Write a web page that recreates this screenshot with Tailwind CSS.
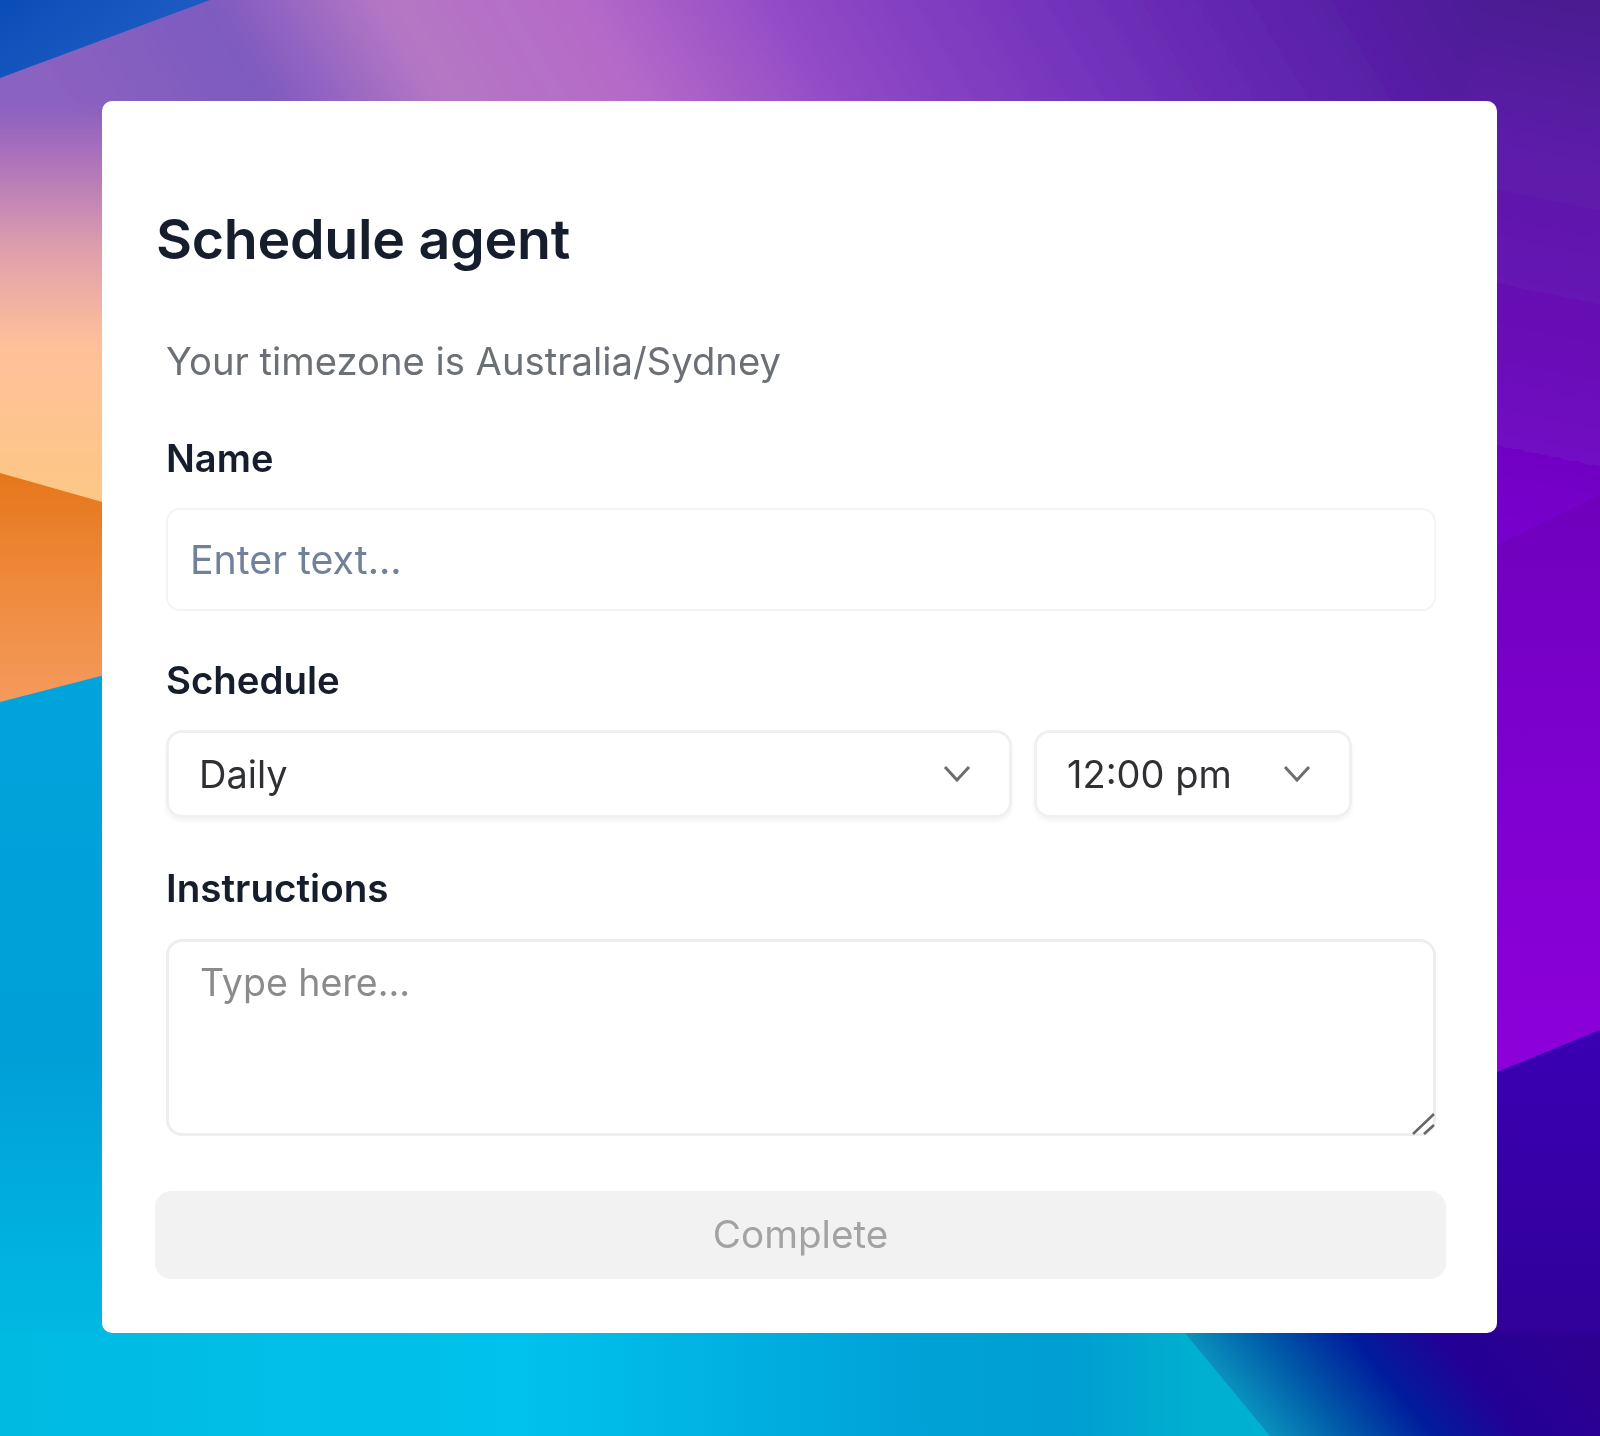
<!DOCTYPE html>
<html lang="en">
<head>
    <meta charset="UTF-8">
    <meta name="viewport" content="width=device-width, initial-scale=1.0">
    <title>Schedule agent</title>
    <script src="https://cdn.jsdelivr.net/npm/@tailwindcss/browser@4"></script>
</head>
<body class="relative w-[1600px] h-[1436px] overflow-hidden pt-[101px] pl-[102px] font-['Inter',sans-serif]">
    <!-- wallpaper -->
    <svg class="absolute inset-0" width="1600" height="1436" viewBox="0 0 1600 1436" xmlns="http://www.w3.org/2000/svg">
        <defs>
            <linearGradient id="top" gradientUnits="userSpaceOnUse" x1="0" y1="0" x2="1175" y2="-705">
                <stop offset="0" stop-color="#8a62c0"/>
                <stop offset="0.13" stop-color="#7e5ac0"/>
                <stop offset="0.24" stop-color="#b577c4"/>
                <stop offset="0.36" stop-color="#b56ac8"/>
                <stop offset="0.5" stop-color="#8f48c6"/>
                <stop offset="0.65" stop-color="#7434bc"/>
                <stop offset="0.82" stop-color="#5a20a8"/>
                <stop offset="1" stop-color="#43198a"/>
            </linearGradient>
            <linearGradient id="left" x1="0" y1="0" x2="0" y2="1">
                <stop offset="0" stop-color="#9064be"/>
                <stop offset="0.09" stop-color="#a86ebc"/>
                <stop offset="0.34" stop-color="#e0a0ac"/>
                <stop offset="0.568" stop-color="#ffc09a"/>
                <stop offset="1" stop-color="#fdc882"/>
            </linearGradient>
            <linearGradient id="orange" x1="0" y1="0" x2="0" y2="1">
                <stop offset="0" stop-color="#e6761a"/>
                <stop offset="0.45" stop-color="#ee8a3c"/>
                <stop offset="1" stop-color="#f69c62"/>
            </linearGradient>
            <linearGradient id="blue" x1="0" y1="0" x2="0" y2="1">
                <stop offset="0" stop-color="#00a4dc"/>
                <stop offset="0.5" stop-color="#009fd8"/>
                <stop offset="0.85" stop-color="#00b8e2"/>
                <stop offset="1" stop-color="#00c0e6"/>
            </linearGradient>
            <linearGradient id="right" gradientUnits="userSpaceOnUse" x1="1620" y1="-20" x2="1500" y2="560">
                <stop offset="0" stop-color="#451a8c"/>
                <stop offset="0.3" stop-color="#5c1ea8"/>
                <stop offset="0.65" stop-color="#6a0cb8"/>
                <stop offset="1" stop-color="#7a00d0"/>
            </linearGradient>
            <linearGradient id="violet" x1="0" y1="0" x2="0" y2="1">
                <stop offset="0" stop-color="#7000bc"/>
                <stop offset="0.5" stop-color="#7f00d0"/>
                <stop offset="1" stop-color="#8d00da"/>
            </linearGradient>
            <linearGradient id="indigo" x1="0" y1="0" x2="0" y2="1">
                <stop offset="0" stop-color="#3a00b4"/>
                <stop offset="1" stop-color="#2e0090"/>
            </linearGradient>
            <linearGradient id="bottom" gradientUnits="userSpaceOnUse" x1="0" y1="1333" x2="1300" y2="1333">
                <stop offset="0" stop-color="#00bae2"/>
                <stop offset="0.4" stop-color="#00c2ec"/>
                <stop offset="0.68" stop-color="#00a4d8"/>
                <stop offset="0.82" stop-color="#009ed2"/>
                <stop offset="0.92" stop-color="#00b0d0"/>
            </linearGradient>
            <linearGradient id="deep" gradientUnits="userSpaceOnUse" x1="1230" y1="1385" x2="1461" y2="1194">
                <stop offset="0" stop-color="#0a8fbc"/>
                <stop offset="0.2" stop-color="#0058a8"/>
                <stop offset="0.42" stop-color="#001c9c"/>
                <stop offset="0.65" stop-color="#240096"/>
                <stop offset="1" stop-color="#2e0090"/>
            </linearGradient>
            <linearGradient id="corner" gradientUnits="userSpaceOnUse" x1="0" y1="0" x2="120" y2="170">
                <stop offset="0" stop-color="#0a4cb8"/>
                <stop offset="1" stop-color="#2a66c8"/>
            </linearGradient>
            <filter id="soft" filterUnits="userSpaceOnUse" x="-100" y="-100" width="1800" height="1636">
                <feGaussianBlur stdDeviation="9"/>
            </filter>
        </defs>
        <g filter="url(#soft)">
            <rect x="-60" y="-60" width="1720" height="190" fill="url(#top)"/>
            <rect x="-60" y="115" width="200" height="405" fill="url(#left)"/>
            <rect x="1470" y="-60" width="190" height="640" fill="url(#right)"/>
        </g>
        <polygon points="0,0 210,0 0,78" fill="url(#corner)"/>
        <polygon points="1470,558 1600,495 1600,1052 1470,1078" fill="url(#violet)"/>
        <polygon points="1470,1083 1600,1030 1600,1436 1470,1436" fill="url(#indigo)"/>
        <polygon points="0,473 120,507 120,690 0,720" fill="url(#orange)"/>
        <polygon points="0,702 120,671 120,1436 0,1436" fill="url(#blue)"/>
        <rect x="0" y="1333" width="1300" height="103" fill="url(#bottom)"/>
        <polygon points="1185,1333 1600,1333 1600,1436 1270,1436" fill="url(#deep)"/>
    </svg>

    <main class="relative w-[1395px] h-[1232px] rounded-[10px] bg-white text-[#161e2e]">
        <div class="blur-[0.6px]">
            <h1 class="pl-[54px] pt-[108px] text-[55.5px] leading-[60px] font-semibold tracking-[-0.3px]">Schedule agent</h1>
            <form class="pl-[64px] pt-[68px]">
                <p class="text-[38.2px] leading-[48px] text-[#6b6f76]">Your timezone is Australia/Sydney</p>

                <label class="block mt-[50px] text-[38px] leading-[46px] font-semibold">Name</label>
                <input class="block mt-[27px] w-[1270px] h-[103px] rounded-[14px] border-2 border-[#f3f4f5] pl-[22px] text-[39.3px] placeholder:text-[#70819a]" placeholder="Enter text...">

                <label class="block mt-[46px] text-[38.4px] leading-[46px] font-semibold">Schedule</label>
                <div class="mt-[27px] flex gap-[22px]">
                    <div class="flex items-center justify-between w-[846px] h-[88px] rounded-[16px] border-[3px] border-[#f0f0f0] shadow-[0_3px_4px_rgba(0,0,0,0.05)] pl-[30px] pr-[37px] text-[38px] text-[#2f3033]">
                        <span>Daily</span>
                        <svg width="30" height="22" viewBox="0 0 30 22" fill="none" stroke="#6e6e6e" stroke-width="3"><path d="M3 4 L15 17 L27 4"/></svg>
                    </div>
                    <div class="flex items-center justify-between w-[318px] h-[88px] rounded-[16px] border-[3px] border-[#f0f0f0] shadow-[0_3px_4px_rgba(0,0,0,0.05)] pl-[30px] pr-[37px] text-[38px] text-[#2f3033]">
                        <span>12:00 pm</span>
                        <svg width="30" height="22" viewBox="0 0 30 22" fill="none" stroke="#6e6e6e" stroke-width="3"><path d="M3 4 L15 17 L27 4"/></svg>
                    </div>
                </div>

                <label class="block mt-[47px] text-[38.6px] leading-[46px] font-semibold">Instructions</label>
                <div class="relative mt-[28px] w-[1270px] h-[197px]">
                    <textarea class="block w-full h-full resize-none rounded-[16px] border-[3px] border-[#eeeeee] pl-[31px] pt-[17px] text-[37.5px] leading-[48px] placeholder:text-[#8b8b8b]" placeholder="Type here..."></textarea>
                    <svg class="absolute right-0 bottom-0" width="24" height="24" viewBox="0 0 24 24" fill="none" stroke="#666666" stroke-width="2.5"><path d="M1 22 L22 2 M12 22 L22 13"/></svg>
                </div>
            </form>
            <button disabled class="block ml-[53px] mt-[55px] w-[1291px] h-[88px] rounded-[16px] bg-[#f2f2f2] text-[38.6px] text-[#a3a3a3]">Complete</button>
        </div>
    </main>
</body>
</html>
